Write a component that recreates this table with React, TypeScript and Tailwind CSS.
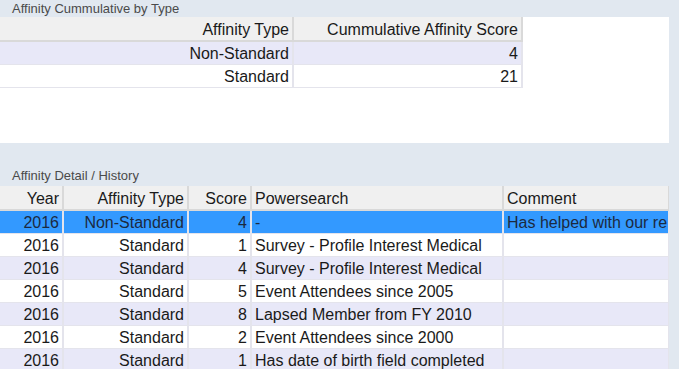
import type { ReactNode } from "react";

type DetailRow = {
  year: string;
  type: string;
  score: number;
  search: string;
  comment: string;
};

const summary = [
  { type: "Non-Standard", score: 4 },
  { type: "Standard", score: 21 },
];

const detail: DetailRow[] = [
  { year: "2016", type: "Non-Standard", score: 4, search: "-", comment: "Has helped with our research projects" },
  { year: "2016", type: "Standard", score: 1, search: "Survey - Profile Interest Medical", comment: "" },
  { year: "2016", type: "Standard", score: 4, search: "Survey - Profile Interest Medical", comment: "" },
  { year: "2016", type: "Standard", score: 5, search: "Event Attendees since 2005", comment: "" },
  { year: "2016", type: "Standard", score: 8, search: "Lapsed Member from FY 2010", comment: "" },
  { year: "2016", type: "Standard", score: 2, search: "Event Attendees since 2000", comment: "" },
  { year: "2016", type: "Standard", score: 1, search: "Has date of birth field completed", comment: "" },
];

function Th({ children, left, w }: { children: ReactNode; left?: boolean; w: string }) {
  return (
    <th
      className={`${w} h-[24px] border-r-2 border-b-2 border-[#d9d9d9] bg-[#f0f0f0] px-[3px] pt-[3px] pb-0 font-normal whitespace-nowrap overflow-hidden ${
        left ? "text-left" : "text-right"
      }`}
    >
      {children}
    </th>
  );
}

function Td({ children, left }: { children: ReactNode; left?: boolean }) {
  return (
    <td
      className={`h-[23px] border-r-2 border-b border-[#e4e4ec] px-[3px] pt-[3px] pb-0 whitespace-nowrap overflow-hidden ${
        left ? "text-left" : "text-right"
      }`}
    >
      {children}
    </td>
  );
}

export default function App() {
  return (
    <div
      className="w-[679px] h-[369px] overflow-hidden bg-[#e1e8f0] text-[16px] leading-none text-[#1a1a1a]"
      style={{ fontFamily: '"Liberation Sans", Arial, sans-serif' }}
    >
      <div className="h-[17px] pl-[12px] pt-[2px] text-[13px] text-[#4a4a4a]">
        Affinity Cummulative by Type
      </div>
      <div className="w-[669px] h-[126px] bg-white">
        <table className="table-fixed border-collapse">
          <thead>
            <tr>
              <Th w="w-[293px]">Affinity Type</Th>
              <Th w="w-[229px]">Cummulative Affinity Score</Th>
            </tr>
          </thead>
          <tbody>
            {summary.map((r, i) => (
              <tr key={r.type} className={i % 2 === 0 ? "bg-[#e8e8f8]" : "bg-white"}>
                <Td>{r.type}</Td>
                <Td>{r.score}</Td>
              </tr>
            ))}
          </tbody>
        </table>
      </div>
      <div className="h-[43px] flex items-end pl-[12px] pb-[4px] text-[13px] text-[#4a4a4a]">
        Affinity Detail / History
      </div>
      <div className="w-[669px] bg-white overflow-hidden">
        <table className="table-fixed border-collapse w-[669px]">
          <thead>
            <tr>
              <Th w="w-[63px]">Year</Th>
              <Th w="w-[125px]">Affinity Type</Th>
              <Th w="w-[63px]">Score</Th>
              <Th w="w-[252px]" left>
                Powersearch
              </Th>
              <Th w="w-[166px]" left>
                Comment
              </Th>
            </tr>
          </thead>
          <tbody>
            {detail.map((r, i) => (
              <tr
                key={i}
                className={
                  i === 0
                    ? "bg-[#3399ff] text-[#1c2a3f]"
                    : i % 2 === 0
                    ? "bg-[#e8e8f8]"
                    : "bg-white"
                }
              >
                <Td>{r.year}</Td>
                <Td>{r.type}</Td>
                <Td>{r.score}</Td>
                <Td left>{r.search}</Td>
                <Td left>
                  <div className="w-[160px] overflow-hidden">{r.comment}</div>
                </Td>
              </tr>
            ))}
          </tbody>
        </table>
      </div>
    </div>
  );
}
